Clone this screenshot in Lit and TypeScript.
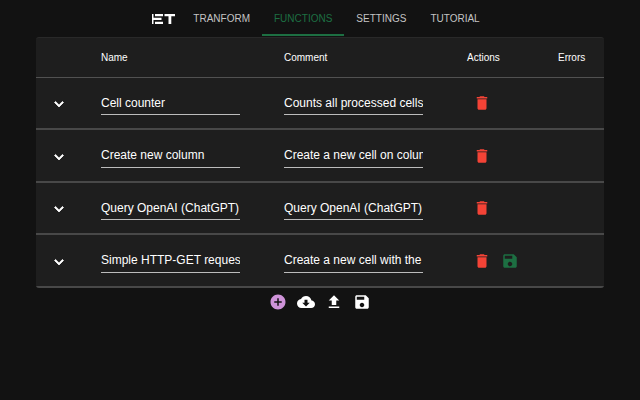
import { LitElement, html, css, svg } from "lit";
import { customElement, state } from "lit/decorators.js";
import { classMap } from "lit/directives/class-map.js";

interface CellFunction {
  name: string;
  comment: string;
  edited?: boolean;
}

const icons = {
  chevron: "M7.41 8.59 12 13.17l4.59-4.58L18 10l-6 6-6-6 1.41-1.41z",
  trash: "M6 19c0 1.1.9 2 2 2h8c1.1 0 2-.9 2-2V7H6v12zM19 4h-3.5l-1-1h-5l-1 1H5v2h14V4z",
  save: "M17 3H5c-1.11 0-2 .9-2 2v14c0 1.1.89 2 2 2h14c1.1 0 2-.9 2-2V7l-4-4zm-5 16c-1.66 0-3-1.34-3-3s1.34-3 3-3 3 1.34 3 3-1.34 3-3 3zm3-10H5V5h10v4z",
  add: "M12 2C6.48 2 2 6.48 2 12s4.480 10 10 10 10-4.480 10-10S17.520 2 12 2zm5 11h-4v4h-2v-4H7v-2h4V7h2v4h4v2z",
  cloud: "M19.350 10.040C18.670 6.590 15.640 4 12 4 9.110 4 6.600 5.640 5.350 8.040 2.340 8.360 0 10.910 0 14c0 3.310 2.690 6 6 6h13c2.760 0 5-2.240 5-5 0-2.640-2.050-4.780-4.650-4.960zM17 13l-5 5-5-5h3V9h4v4h3z",
  upload: "M9 16h6v-6h4l-7-7-7 7h4v6zm-4 2h14v2H5z",
};

const icon = (path: string) => html`
  <svg class="icon" viewBox="0 0 24 24" aria-hidden="true">${svg`<path d=${path}></path>`}</svg>
`;

@customElement("app-root")
export class AppRoot extends LitElement {
  static styles = css`
    :host {
      display: block;
      min-height: 100vh;
      background: #121212;
      color: #fff;
      font-family: "Liberation Sans", Arial, sans-serif;
      font-size: 10px;
    }
    nav {
      display: flex;
      justify-content: center;
      align-items: center;
      height: 36px;
      padding-left: 4px;
    }
    .logo {
      width: 24px;
      height: 12px;
      margin: 2px 5px 0 0;
      fill: #fff;
    }
    .tab {
      display: flex;
      align-items: center;
      box-sizing: border-box;
      height: 36px;
      padding: 2px 12px 0;
      border-bottom: 2px solid transparent;
      color: #c4c4c4;
      text-decoration: none;
    }
    .tab.active {
      color: #1d6f42;
      border-color: #1d6f42;
    }
    main {
      margin: 1px 36px 0;
    }
    table {
      width: 100%;
      table-layout: fixed;
      border-collapse: separate;
      border-spacing: 0;
      background: #1e1e1e;
      border-top: 1px solid #292929;
      border-radius: 3px;
      overflow: hidden;
    }
    .col-toggle { width: 53px; }
    .col-actions { width: 91px; }
    .col-errors { width: 58px; }
    th, td {
      box-sizing: border-box;
      padding: 0 0 0 12px;
      border-bottom: 1px solid #515151;
      text-align: left;
    }
    th {
      height: 40px;
      font-weight: 400;
    }
    td {
      height: 52px;
      border-bottom: 2px solid #484848;
    }
    tr:nth-child(even) td { height: 53px; }
    .field { padding-right: 32px; }
    input {
      display: block;
      box-sizing: border-box;
      width: 100%;
      height: 24px;
      padding: 0;
      border: 0;
      border-bottom: 1px solid #bcbcbc;
      border-radius: 0;
      outline: none;
      background: none;
      color: #fff;
      font: 12px "Liberation Sans", Arial, sans-serif;
    }
    button {
      display: flex;
      padding: 5px;
      border: 0;
      background: none;
      color: #fff;
      cursor: pointer;
    }
    .icon {
      width: 18px;
      height: 18px;
      fill: currentColor;
    }
    .toggle { padding: 2px 2px 0; }
    .toggle .icon {
      stroke: currentColor;
      stroke-width: 1;
    }
    .row-actions { display: flex; margin-left: 1px; }
    .delete { color: #f44336; }
    .store { color: #1d6f42; }
    .toolbar {
      display: flex;
      justify-content: center;
    }
    .add { color: #ce93d8; }
  `;

  @state() private current = "Functions";

  private tabs = ["Tranform", "Functions", "Settings", "Tutorial"];

  private rows: CellFunction[] = [
    { name: "Cell counter", comment: "Counts all processed cells" },
    { name: "Create new column", comment: "Create a new cell on column" },
    { name: "Query OpenAI (ChatGPT) for cell", comment: "Query OpenAI (ChatGPT) for cell" },
    { name: "Simple HTTP-GET request", comment: "Create a new cell with the content", edited: true },
  ];

  private select(event: Event, tab: string) {
    event.preventDefault();
    this.current = tab;
  }

  render() {
    return html`
      <nav>
        <svg class="logo" viewBox="0 0 24 12" role="img" aria-label="ET">
          <path d="M0 1h1.500v3.800H9.500v2.200H1.500V11H0zM3 1h8v2.200H3zM3 8.800h8V11H3zM12.500 1h10.500v2.200h-3.700V11h-2.800V3.200h-4z"></path>
        </svg>
        ${this.tabs.map((tab) => html`
          <a href="#${tab.toLowerCase()}"
            class=${classMap({ tab: true, active: tab === this.current })}
            @click=${(e: Event) => this.select(e, tab)}>${tab.toUpperCase()}</a>
        `)}
      </nav>
      <main>
        <table>
          <colgroup>
            <col class="col-toggle"><col><col><col class="col-actions"><col class="col-errors">
          </colgroup>
          <thead>
            <tr><th></th><th>Name</th><th>Comment</th><th>Actions</th><th>Errors</th></tr>
          </thead>
          <tbody>
            ${this.rows.map((row) => html`
              <tr>
                <td><button class="toggle" aria-label="Expand">${icon(icons.chevron)}</button></td>
                <td class="field"><input type="text" aria-label="Name" .value=${row.name}></td>
                <td class="field"><input type="text" aria-label="Comment" .value=${row.comment}></td>
                <td>
                  <div class="row-actions">
                    <button class="delete" aria-label="Delete">${icon(icons.trash)}</button>
                    ${row.edited ? html`<button class="store" aria-label="Save">${icon(icons.save)}</button>` : ""}
                  </div>
                </td>
                <td></td>
              </tr>
            `)}
          </tbody>
        </table>
        <div class="toolbar">
          <button class="add" aria-label="Add function">${icon(icons.add)}</button>
          <button aria-label="Download">${icon(icons.cloud)}</button>
          <button aria-label="Upload">${icon(icons.upload)}</button>
          <button aria-label="Save all">${icon(icons.save)}</button>
        </div>
      </main>
    `;
  }
}
